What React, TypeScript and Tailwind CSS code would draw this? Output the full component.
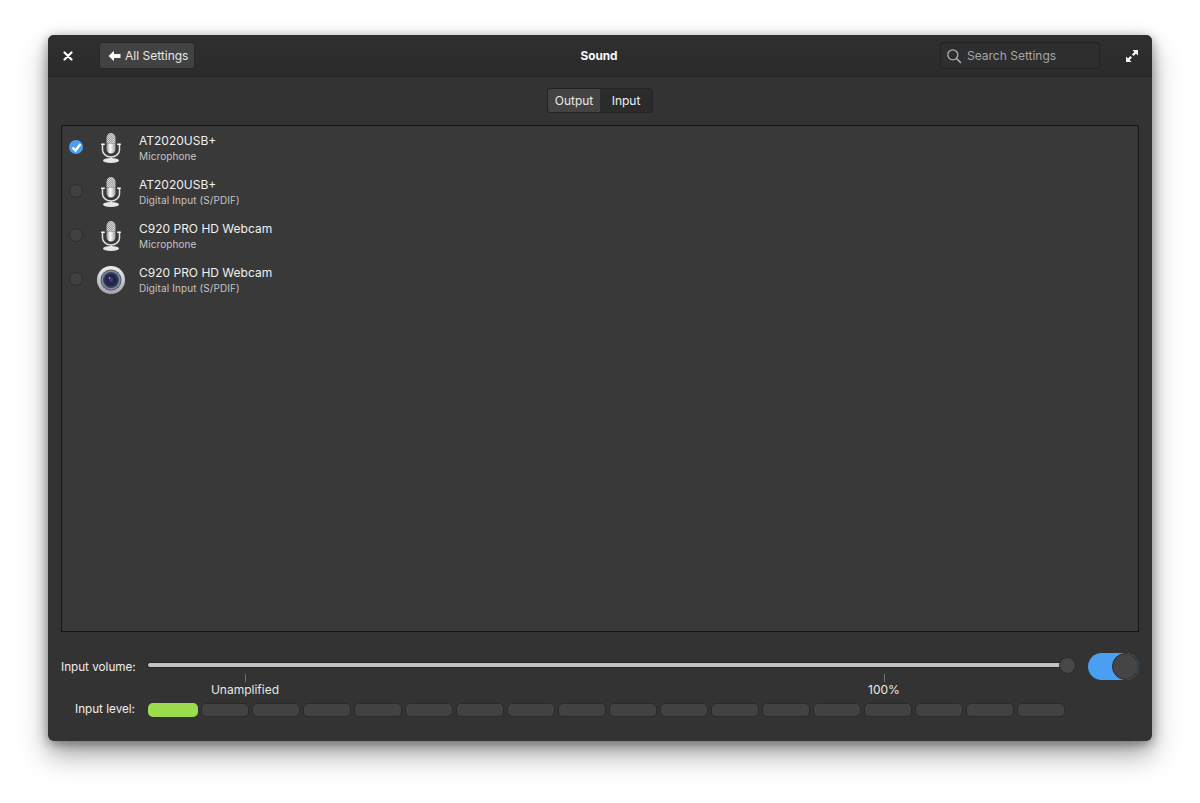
import { useId } from "react";

const devices = [
  { name: "AT2020USB+", port: "Microphone", kind: "mic", active: true },
  { name: "AT2020USB+", port: "Digital Input (S/PDIF)", kind: "mic", active: false },
  { name: "C920 PRO HD Webcam", port: "Microphone", kind: "mic", active: false },
  { name: "C920 PRO HD Webcam", port: "Digital Input (S/PDIF)", kind: "camera", active: false },
];

const levels = Array.from({ length: 18 }, (_, i) => i);

const MicIcon = () => {
  const id = useId();
  return (
    <svg width="32" height="32" viewBox="0 0 32 32" fill="none">
      <defs>
        <linearGradient id={`${id}body`} x1="0" y1="0" x2="1" y2="0">
          <stop offset="0" stopColor="#8f8f8f" />
          <stop offset="0.4" stopColor="#ffffff" />
          <stop offset="1" stopColor="#a0a0a0" />
        </linearGradient>
        <pattern id={`${id}mesh`} width="2" height="2" patternUnits="userSpaceOnUse">
          <rect width="2" height="2" fill="#cfcfcf" />
          <rect width="1" height="1" fill="#a2a2a2" />
          <rect x="1" y="1" width="1" height="1" fill="#a2a2a2" />
        </pattern>
      </defs>
      <path d="M11.500 6a4.500 5 0 0 1 9 0v5.500h-9z" fill={`url(#${id}mesh)`} />
      <path d="M11.500 11.500h9V17a4.500 4.500 0 0 1-9 0z" fill={`url(#${id}body)`} />
      <path d="M7.500 12.500V18a8.500 7 0 0 0 17 0v-5.500" stroke="#e0e0e0" strokeWidth="1.500" />
      <rect x="6" y="11.500" width="4" height="1.500" rx=".7" fill="#ffffff" />
      <rect x="22" y="11.500" width="4" height="1.500" rx=".7" fill="#ffffff" />
      <rect x="15.200" y="24.500" width="1.600" height="2.500" fill="#cfcfcf" />
      <ellipse cx="16" cy="28.500" rx="8" ry="2.500" fill="#e6e6e6" />
    </svg>
  );
};

const CameraIcon = () => {
  const id = useId();
  return (
    <svg width="32" height="32" viewBox="0 0 32 32">
      <defs>
        <linearGradient id={`${id}rim`} x1="0" y1="0" x2="0" y2="1">
          <stop offset="0" stopColor="#eeeeee" />
          <stop offset="1" stopColor="#a4a4a4" />
        </linearGradient>
        <radialGradient id={`${id}lens`} cx="0.5" cy="0.5" r="0.5">
          <stop offset="0" stopColor="#7a2f9a" />
          <stop offset="0.3" stopColor="#27285e" />
          <stop offset="0.6" stopColor="#1e2438" />
          <stop offset="1" stopColor="#3c4a68" />
        </radialGradient>
      </defs>
      <circle cx="16" cy="16" r="14" fill={`url(#${id}rim)`} />
      <circle cx="16" cy="16" r="10.500" fill="#4f5a6c" />
      <circle cx="16" cy="16" r="9.500" fill="#7d8ca8" />
      <circle cx="16" cy="16" r="8" fill={`url(#${id}lens)`} />
      <circle cx="14.500" cy="14" r=".8" fill="#d8c8ee" />
    </svg>
  );
};

const App = () => {
  return (
    <div className="h-[803px] w-[1200px] overflow-hidden bg-white px-[48px] pt-[35px] font-['Inter',sans-serif] text-[#f2f2f2]">
      <div className="flex h-[706px] flex-col rounded-[6px] bg-[#333333] shadow-[0_14px_28px_rgba(0,0,0,0.35),0_3px_12px_rgba(0,0,0,0.4)]">
        {/* header */}
        <div className="grid h-[42px] shrink-0 grid-cols-[1fr_auto_1fr] items-center rounded-t-[6px] border-b border-[#222222] bg-gradient-to-b from-[#2f2f2f] to-[#2b2b2b] px-[13px]">
          <div className="flex items-center">
            <svg width="10" height="10" viewBox="0 0 10 10" className="ml-[2px] mr-[26px] shrink-0">
              <path d="M1.500 1.500l7 7M8.500 1.500l-7 7" stroke="#fafafa" strokeWidth="2.200" strokeLinecap="round" />
            </svg>
            <button className="flex h-[27px] w-[96px] shrink-0 items-center rounded-[3px] border border-[#262626] bg-[#424242] pl-[8px] text-[12px] text-[#e8e8e8]">
              <svg width="13" height="12" viewBox="0 0 13 12" className="mr-[4px] shrink-0">
                <path d="M0.500 6L6 .8V4h6.500v4H6v3.200z" fill="#fafafa" />
              </svg>
              <span className="pt-[1px]">All Settings</span>
            </button>
          </div>
          <div className="pr-[2px] pt-[2px] text-[11.800px] font-bold text-[#fafafa]">Sound</div>
          <div className="flex items-center justify-end">
            <div className="flex h-[27px] w-[160px] shrink-0 items-center rounded-[3px] border border-[#232323] bg-[#2e2e2e] pl-[5px] text-[12px] text-[#a6a6a6]">
              <svg width="16" height="16" viewBox="0 0 16 16" fill="none" className="mr-[5px] shrink-0">
                <circle cx="6.800" cy="6.800" r="5" stroke="#b0b0b0" strokeWidth="1.300" />
                <path d="M10.500 10.500l4 4" stroke="#b0b0b0" strokeWidth="1.600" strokeLinecap="round" />
              </svg>
              <span className="pt-[1px]">Search Settings</span>
            </div>
            <svg width="14" height="14" viewBox="0 0 14 14" className="ml-[25px] shrink-0">
              <path d="M13 1v5.500L11 4.600 8.600 7 7 5.400 9.400 3 7.500 1zM1 13V7.500L3 9.400 5.400 7 7 8.600 4.600 11l1.900 2z" fill="#fafafa" />
            </svg>
          </div>
        </div>

        {/* body */}
        <div className="flex min-h-0 flex-1 flex-col px-[13px] pb-[24px] pt-[11px]">
          <div className="flex shrink-0 justify-center">
            <div className="flex h-[25px] w-[106px] rounded-[3px] border border-[#232323] text-[12px]">
              <div className="flex w-[53px] items-center justify-center rounded-l-[3px] bg-[#434343] pt-[1px] text-[#e8e8e8]">Output</div>
              <div className="flex w-[53px] items-center justify-center rounded-r-[3px] bg-[#2b2b2b] pt-[1px] text-[#f0f0f0]">Input</div>
            </div>
          </div>

          <div className="mt-[12px] h-[507px] shrink-0 border border-[#141414] bg-[#393939]">
            {devices.map((d, i) => (
              <div key={i} className="flex h-[44px] items-center pl-[7px]">
                {d.active ? (
                  <div className="-mt-[2px] flex h-[14px] w-[14px] shrink-0 items-center justify-center rounded-full bg-[#4a9ff2]">
                    <svg width="11" height="11" viewBox="0 0 11 11" fill="none">
                      <path d="M1.500 5.500l3 3 5-6.500" stroke="#ffffff" strokeWidth="2.400" />
                    </svg>
                  </div>
                ) : (
                  <div className="-mt-[2px] h-[14px] w-[14px] shrink-0 rounded-full border border-[#2c2c2c] bg-[#414141]" />
                )}
                <div className="ml-[12px] h-[32px] w-[32px] shrink-0">
                  {d.kind === "mic" ? <MicIcon /> : <CameraIcon />}
                </div>
                <div className="-mt-[2px] ml-[12px] flex flex-col">
                  <span className="text-[12px] leading-[17px] text-[#f0f0f0]">{d.name}</span>
                  <span className="text-[10px] leading-[14px] tracking-[0.1px] text-[#c4c4c4]">{d.port}</span>
                </div>
              </div>
            ))}
          </div>

          {/* volume */}
          <div className="mt-[21px] flex h-[27px] shrink-0 items-center">
            <div className="w-[74px] whitespace-nowrap pt-[2px] text-right text-[11.700px] text-[#eeeeee]">Input volume:</div>
            <div className="ml-[13px] flex w-[928px] items-center pb-[3px]">
              <div className="h-[4px] flex-1 rounded-l-[2px] bg-[#c4c4c4] shadow-[0_0_0_1px_#262626]" />
              <div className="-ml-[1px] h-[17px] w-[17px] shrink-0 rounded-full border border-[#2a2a2a] bg-[#484848]" />
            </div>
            <div className="ml-[12px] flex h-[27px] w-[51px] shrink-0 justify-end rounded-full bg-[#4a9ff2]">
              <div className="h-[27px] w-[27px] rounded-full border border-[#26282c] bg-[#454545]" />
            </div>
          </div>

          <div className="-mt-[6px] ml-[87px] flex h-[28px] shrink-0">
            <div className="ml-[63px] flex w-[68px] flex-col items-center">
              <div className="h-[8px] w-px bg-[#707070]" />
              <span className="text-[12px] leading-[15px] text-[#e8e8e8]">Unamplified</span>
            </div>
            <div className="ml-[589px] flex w-[32px] flex-col items-center">
              <div className="h-[8px] w-px bg-[#707070]" />
              <span className="text-[12px] leading-[15px] text-[#e8e8e8]">100%</span>
            </div>
          </div>

          <div className="flex h-[15px] shrink-0 items-center">
            <div className="w-[74px] whitespace-nowrap text-right text-[11.700px] text-[#eeeeee]">Input level:</div>
            <div className="ml-[13px] flex gap-[3px]">
              {levels.map((i) => (
                <div
                  key={i}
                  className={
                    i === 0
                      ? "h-[14px] w-[50px] rounded-[5px] bg-[#9bdb4d]"
                      : "h-[14px] w-[48px] rounded-[5px] border border-[#2a2a2a] bg-[#424242]"
                  }
                />
              ))}
            </div>
          </div>
        </div>
      </div>
    </div>
  );
};

export default App;
